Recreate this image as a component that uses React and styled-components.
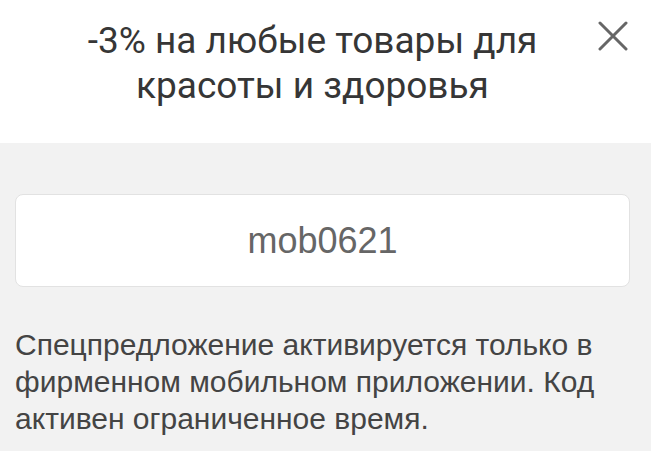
import React from 'react';
import styled, { createGlobalStyle } from 'styled-components';

const GlobalStyle = createGlobalStyle`
  html, body {
    margin: 0;
    padding: 0;
    background: #f2f2f2;
  }
`;

export default function App() {
  return (
    <>
      <GlobalStyle />
      <Sheet>
        <Header>
          <Title>-3% на любые товары для красоты и здоровья</Title>
          <CloseButton aria-label="Закрыть">
            <svg width="30" height="30" viewBox="0 0 30 30">
              <path d="M2 2 L28 28 M28 2 L2 28" stroke="#666" strokeWidth="3" strokeLinecap="round" />
            </svg>
          </CloseButton>
        </Header>
        <Body>
          <CodeBox>mob0621</CodeBox>
          <Note>
            Спецпредложение активируется только в фирменном мобильном приложении. Код активен ограниченное время.
          </Note>
        </Body>
      </Sheet>
    </>
  );
}

const Sheet = styled.div`
  width: 651px;
  min-height: 451px;
  background: #f2f2f2;
`;

const Header = styled.div`
  height: 143px;
  box-sizing: border-box;
  background: #ffffff;
  display: flex;
  align-items: flex-start;
  padding: 18px 23px 0 27px;
`;

const Title = styled.h1`
  flex: 1;
  margin: 0;
  font-family: Roboto, "Noto Sans", sans-serif;
  font-weight: 400;
  font-size: 37px;
  line-height: 45px;
  color: #363636;
  text-align: center;
`;

const CloseButton = styled.button`
  width: 30px;
  height: 30px;
  margin-top: 3px;
  padding: 0;
  border: none;
  background: none;
  display: flex;
  align-items: center;
  justify-content: center;
  cursor: pointer;
`;

const Body = styled.div`
  padding: 51px 21px 0 15px;
`;

const CodeBox = styled.div`
  height: 93px;
  box-sizing: border-box;
  background: #ffffff;
  border: 1px solid #e2e2e2;
  border-radius: 8px;
  display: flex;
  align-items: center;
  justify-content: center;
  font-family: "Liberation Sans", Arial, sans-serif;
  font-size: 36px;
  color: #666666;
`;

const Note = styled.p`
  margin: 39px 0 0 0;
  font-family: "Liberation Sans", Arial, sans-serif;
  font-size: 30px;
  line-height: 37px;
  color: #444444;
`;
